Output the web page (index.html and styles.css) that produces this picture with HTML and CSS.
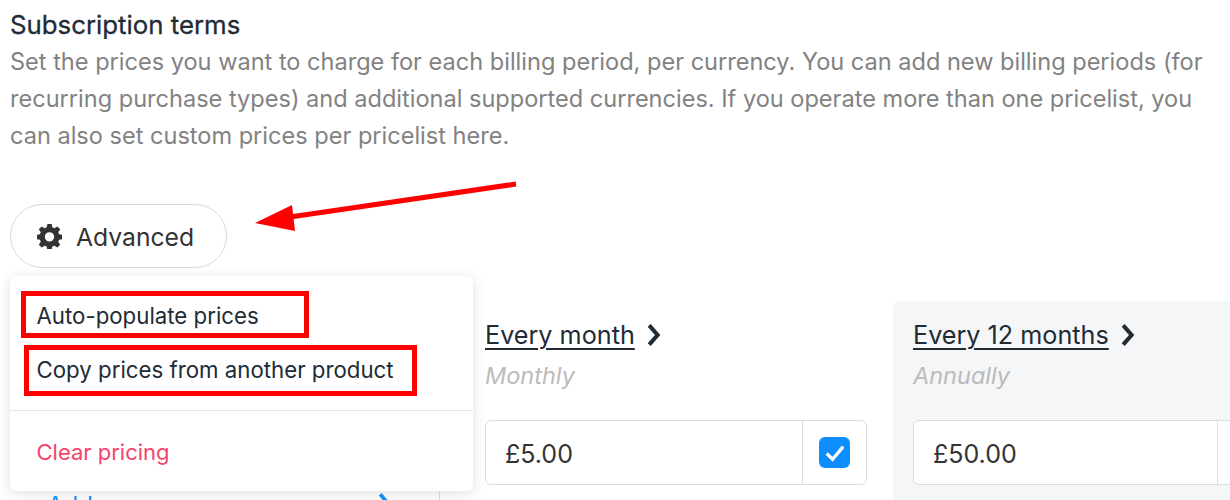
FILE: index.html
```html
<!DOCTYPE html>
<html lang="en">
<head>
  <meta charset="UTF-8">
  <title>Subscription terms</title>
  <link rel="stylesheet" href="styles.css">
</head>
<body>

<div class="page">
  <h2 class="title">Subscription terms</h2>
  <p class="desc">Set the prices you want to charge for each billing period, per currency. You can add new billing periods (for recurring purchase types) and additional supported currencies. If you operate more than one pricelist, you can also set custom prices per pricelist here.</p>

  <button class="adv-btn">
    <svg class="gear" viewBox="0 0 24 24"><path fill-rule="evenodd" d="M10 0h4l.7 3.2 2 .8L19.500 2.300l2.800 2.800L20.400 7.900l.8 2L24.400 10.500v4l-3.200.6-.8 2 1.900 2.700-2.800 2.800-2.800-1.800-2 .8-.7 3.400h-4l-.7-3.400-2-.8-2.800 1.800-2.800-2.800 1.900-2.700-.8-2L-.4 14.500v-4l3.200-.6.800-2L1.700 5.100l2.800-2.800L7.300 4l2-.8zM12 7.800a4.500 4.500 0 1 0 0 9 4.500 4.500 0 0 0 0-9z"/></svg>
    <span class="adv-label">Advanced</span>
  </button>

  <div class="pricing">
    <div class="side">
      <a class="add-link">Add currency
        <svg class="add-chev" viewBox="0 0 12 20"><path d="M2 2l7 8-7 8"/></svg></a>
    </div>
    <div class="period">
      <a class="period-name"><span>Every month</span>
        <svg class="chev" viewBox="0 0 12 20"><path d="M2 2l7 8-7 8"/></svg></a>
      <div class="period-sub">Monthly</div>
      <div class="price">
        <div class="price-val">£5.00</div>
        <div class="price-check">
          <span class="checkbox"><svg viewBox="0 0 32 32"><path d="M8 17l6 6 11-13"/></svg></span>
        </div>
      </div>
    </div>
    <div class="period shaded">
      <a class="period-name"><span>Every 12 months</span>
        <svg class="chev" viewBox="0 0 12 20"><path d="M2 2l7 8-7 8"/></svg></a>
      <div class="period-sub">Annually</div>
      <div class="price wide">
        <div class="price-val">£50.00</div>
        <div class="price-check"></div>
      </div>
    </div>
  </div>

  <!-- dropdown over the pricing table -->
  <div class="menu">
    <div class="menu-top">
      <div class="menu-item">Auto-populate prices</div>
      <div class="menu-item">Copy prices from another product</div>
    </div>
    <div class="menu-item danger">Clear pricing</div>
  </div>

  <!-- red annotations -->
  <div class="mark mark1"></div>
  <div class="mark mark2"></div>
  <svg class="arrow" viewBox="0 0 1230 500">
    <path d="M516 184L290 217" stroke="#f00" stroke-width="5" fill="none"/>
    <path d="M255 223L292 205L295 231z" fill="#f00"/>
  </svg>
</div>

</body>
</html>
```

FILE: styles.css
```css
* { box-sizing: border-box; }
body {
  margin: 0;
  font-family: Inter, 'Noto Sans', sans-serif;
  background: #fff;
  color: #212b36;
}
.page {
  position: relative;
  width: 1230px;
  height: 500px;
  overflow: hidden;
  padding: 10px 0 0 10px;
}
.title {
  margin: 0;
  font-size: 25.800px;
  font-weight: 400;
  line-height: 29px;
  -webkit-text-stroke: 0.3px #212b36;
}
.desc {
  margin: 4px 0 0;
  font-size: 23.560px;
  line-height: 37px;
  color: #828282;
  width: 1215px;
}
.adv-btn {
  display: flex;
  align-items: center;
  gap: 14px;
  margin-top: 50px;
  width: 217px;
  height: 64px;
  padding: 0 0 0 26px;
  background: #fff;
  border: 1.5px solid #d9d9d9;
  border-radius: 32px;
  font-family: inherit;
  font-size: 24.700px;
  color: #333;
}
.adv-label { padding-top: 2px; }
.gear { width: 25px; height: 25px; fill: #333; }
.pricing {
  display: flex;
  margin-top: 33px;
  height: 240px;
}
.side {
  flex: none;
  width: 430px;
  border-right: 1.5px solid #dcdcdc;
  padding: 190px 48px 0 37px;
}
.add-link {
  display: flex;
  justify-content: space-between;
  align-items: flex-start;
  color: #1b8fff;
  font-size: 24px;
  line-height: 30px;
}
.add-chev { width: 13px; height: 22px; margin-top: 1px; fill: none; stroke: #1b8fff; stroke-width: 3.4; }
.period {
  flex: none;
  width: 453px;
  padding: 17px 26px 0 45px;
}
.period.shaded {
  flex: 1;
  width: auto;
  min-width: 0;
  padding-left: 20px;
  padding-right: 0;
  background: #f5f6f8;
  border-radius: 6px 0 0 0;
}
.period-name {
  display: flex;
  align-items: center;
  gap: 11px;
  height: 34px;
  font-size: 25.200px;
  color: #212b36;
}
.period-name span { text-decoration: underline; text-underline-offset: 4px; text-decoration-thickness: 1.5px; }
.chev { width: 16px; height: 24px; fill: none; stroke: #212b36; stroke-width: 3.4; }
.period-sub {
  margin-top: 4px;
  font-size: 23.5px;
  line-height: 40px;
  font-style: italic;
  color: #bbb;
}
.price {
  display: flex;
  margin-top: 24px;
  width: 382px;
  height: 65px;
  background: #fff;
  border: 1.5px solid #dcdcdc;
  border-radius: 6px;
}
.price.wide { width: 400px; }
.price-val {
  flex: none;
  width: 317px;
  padding: 2px 0 0 19px;
  font-size: 25px;
  line-height: 63px;
  color: #333;
  border-right: 1.5px solid #dcdcdc;
}
.price.wide .price-val { width: 304px; }
.price-check {
  flex: 1;
  display: flex;
  align-items: center;
  justify-content: center;
}
.checkbox {
  display: block;
  width: 31px;
  height: 31px;
  background: #0d8eff;
  border-radius: 6px;
}
.checkbox svg { display: block; fill: none; stroke: #fff; stroke-width: 3.4; }
.menu {
  position: absolute;
  left: 10px;
  top: 276px;
  width: 463px;
  height: 215px;
  background: #fff;
  border-radius: 6px;
  box-shadow: 0 2px 14px rgba(0, 0, 0, 0.13);
  font-size: 22.250px;
}
.menu-top {
  height: 135px;
  padding-top: 13px;
  border-bottom: 1.5px solid #e6e6e6;
}
.menu-item {
  height: 54px;
  line-height: 54px;
  padding-left: 26.500px;
}
.danger { color: #f4436c; margin-top: 14px; font-size: 22px; }
.mark {
  position: absolute;
  border: 5px solid #f00;
}
.mark1 { left: 21px; top: 291px; width: 288px; height: 47px; }
.mark2 { left: 24px; top: 345px; width: 393px; height: 51px; }
.arrow {
  position: absolute;
  left: 0;
  top: 0;
  width: 1230px;
  height: 500px;
  pointer-events: none;
}
```
